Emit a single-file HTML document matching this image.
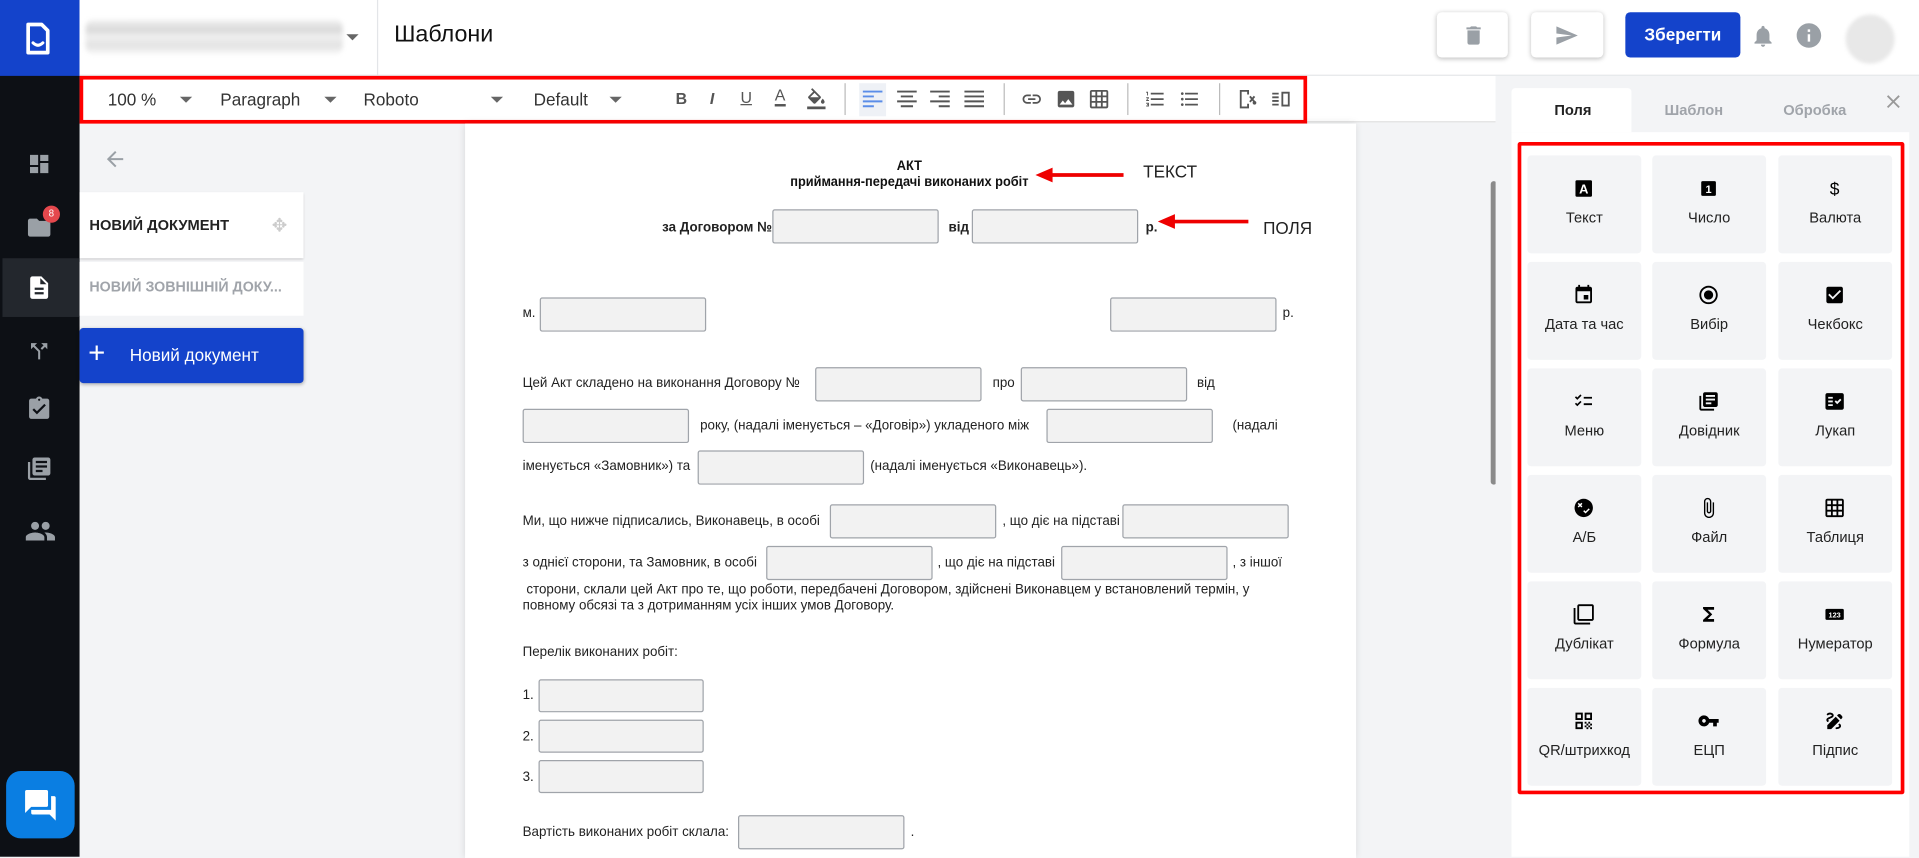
<!DOCTYPE html>
<html><head><meta charset="utf-8">
<style>
*{box-sizing:border-box;margin:0;padding:0}
html,body{width:1919px;height:856px;overflow:hidden;background:#f3f4f6}
#s{position:absolute;left:0;top:0;width:1568px;height:700px;transform:scale(1.2239);transform-origin:0 0;font-family:"Liberation Sans","Noto Sans CJK SC",sans-serif;background:#f3f4f6}
.a{position:absolute}
.f{position:absolute;width:136px;height:28px;background:#f2f2f2;border:1px solid #a0a4aa;border-radius:2px}
.t{position:absolute;font-size:11.5px;line-height:14px;color:#222;white-space:nowrap;transform:scaleX(.95);transform-origin:0 0}
.tc{position:absolute;left:593px;width:300px;text-align:center;font-size:11px;line-height:14px;font-weight:bold;color:#111;transform:scaleX(.95);transform-origin:50% 0}
.b{font-weight:bold}
.ic{position:absolute;fill:#9aa0a6}
.tb{position:absolute;top:72px;width:18px;height:18px;fill:#555}
.tile{position:absolute;width:93px;height:80px;background:#f3f4f6;border-radius:3px;text-align:center;font-size:12px;color:#222}
.tile svg{position:absolute;left:37px;top:18px;width:18px;height:18px}
.tile span{position:absolute;left:0;right:0;top:44px}
.car{position:absolute;top:79px;width:0;height:0;border-left:5px solid transparent;border-right:5px solid transparent;border-top:5px solid #666}
.sep{position:absolute;top:68px;width:1px;height:26px;background:#bbb}
</style></head><body><div id="s">
<!-- sidebar -->
<div class="a" style="left:0;top:0;width:65px;height:700px;background:#0d1015"></div>
<div class="a" style="left:0;top:0;width:65px;height:62px;background:#1443cb"></div>
<svg class="a" style="left:20px;top:18px" width="22" height="28" viewBox="0 0 22 28"><path d="M3 2h11l5 5v18H3z" fill="none" stroke="#fff" stroke-width="3" stroke-linejoin="round"/><path d="M7 17q4 4 8 0" fill="none" stroke="#fff" stroke-width="2.5" stroke-linecap="round"/></svg>
<div class="a" style="left:2px;top:211px;width:63px;height:48px;background:#23272d"></div>
<svg class="ic" style="left:22px;top:124px" width="20" height="20" viewBox="0 0 24 24"><path d="M3 13h8V3H3v10zm0 8h8v-6H3v6zm10 0h8V11h-8v10zm0-18v6h8V3h-8z"/></svg>
<svg class="ic" style="left:21px;top:175px" width="22" height="22" viewBox="0 0 24 24"><path d="M10 4H4c-1.1 0-2 .9-2 2v12c0 1.1.9 2 2 2h16c1.1 0 2-.9 2-2V8c0-1.1-.9-2-2-2h-8l-2-2z"/></svg>
<div class="a" style="left:35px;top:168px;width:14px;height:14px;border-radius:7px;background:#e5484d;color:#fff;font-size:8px;line-height:14px;text-align:center">8</div>
<svg class="a" style="left:21px;top:224px" width="22" height="22" viewBox="0 0 24 24"><path fill="#fff" d="M14 2H6c-1.1 0-2 .9-2 2v16c0 1.1.9 2 2 2h12c1.1 0 2-.9 2-2V8l-6-6zm2 16H8v-2h8v2zm0-4H8v-2h8v2zm-3-5V3.5L18.5 9H13z"/></svg>
<svg class="ic" style="left:22px;top:276px" width="20" height="22" viewBox="0 0 24 24"><path d="M14 4l2.29 2.29-2.88 2.88 1.42 1.42 2.88-2.88L20 10V4zm-4 0H4v6l2.29-2.29 4.71 4.7V20h2v-8.41l-5.29-5.3z"/></svg>
<svg class="ic" style="left:21px;top:323px" width="22" height="22" viewBox="0 0 24 24"><path d="M19 3h-4.18C14.4 1.84 13.3 1 12 1c-1.3 0-2.4.84-2.82 2H5c-1.1 0-2 .9-2 2v14c0 1.1.9 2 2 2h14c1.1 0 2-.9 2-2V5c0-1.1-.9-2-2-2zm-7 0c.55 0 1 .45 1 1s-.45 1-1 1-1-.45-1-1 .45-1 1-1zm-2 14l-4-4 1.41-1.41L10 14.17l6.59-6.59L18 9l-8 8z"/></svg>
<svg class="ic" style="left:21px;top:372px" width="22" height="22" viewBox="0 0 24 24"><path d="M4 6H2v14c0 1.1.9 2 2 2h14v-2H4V6zm16-4H8c-1.1 0-2 .9-2 2v12c0 1.1.9 2 2 2h12c1.1 0 2-.9 2-2V4c0-1.1-.9-2-2-2zm-1 9H9V9h10v2zm-4 4H9v-2h6v2zm4-8H9V5h10v2z"/></svg>
<svg class="ic" style="left:20px;top:421px" width="26" height="26" viewBox="0 0 24 24"><path d="M16 11c1.66 0 2.99-1.34 2.99-3S17.66 5 16 5c-1.66 0-3 1.34-3 3s1.34 3 3 3zm-8 0c1.66 0 2.99-1.34 2.99-3S9.66 5 8 5C6.34 5 5 6.34 5 8s1.34 3 3 3zm0 2c-2.33 0-7 1.17-7 3.5V19h14v-2.5c0-2.33-4.67-3.5-7-3.5zm8 0c-.29 0-.62.02-.97.05 1.16.84 1.97 1.97 1.97 3.45V19h6v-2.5c0-2.33-4.67-3.5-7-3.5z"/></svg>
<div class="a" style="left:5px;top:630px;width:56px;height:55px;border-radius:12px;background:#0a7ee2"></div>
<svg class="a" style="left:18px;top:643px" width="30" height="30" viewBox="0 0 24 24"><path fill="#fff" d="M21 6h-2v9H6v2c0 .55.45 1 1 1h11l4 4V7c0-.55-.45-1-1-1zm-4 6V3c0-.55-.45-1-1-1H3c-.55 0-1 .45-1 1v14l4-4h10c.55 0 1-.45 1-1z"/></svg>
<!-- header -->
<div class="a" style="left:65px;top:0;width:1503px;height:62px;background:#fff;border-bottom:1px solid #e3e5e8"></div>
<div class="a" style="left:70px;top:16px;width:210px;height:28px;background:linear-gradient(180deg,#f3f3f3,#d8d8d8 30%,#f0f0f0 50%,#e2e2e2 75%,#f7f7f7);filter:blur(2px);border-radius:6px"></div>
<div class="a" style="left:283px;top:28px;border-left:5px solid transparent;border-right:5px solid transparent;border-top:5px solid #666"></div>
<div class="a" style="left:308px;top:0;width:1px;height:62px;background:#e3e5e8"></div>
<div class="a" style="left:322px;top:18px;font-size:19px;color:#111">Шаблони</div>
<div class="a" style="left:1174px;top:10px;width:58px;height:37px;background:#fff;border-radius:4px;box-shadow:0 1px 4px rgba(0,0,0,.25)"></div>
<svg class="ic" style="left:1194px;top:18px" width="20" height="22" viewBox="0 0 24 24"><path d="M6 19c0 1.1.9 2 2 2h8c1.1 0 2-.9 2-2V7H6v12zM19 4h-3.5l-1-1h-5l-1 1H5v2h14V4z"/></svg>
<div class="a" style="left:1251px;top:10px;width:59px;height:37px;background:#fff;border-radius:4px;box-shadow:0 1px 4px rgba(0,0,0,.25)"></div>
<svg class="ic" style="left:1270px;top:19px" width="20" height="20" viewBox="0 0 24 24"><path d="M2.01 21L23 12 2.01 3 2 10l15 2-15 2z"/></svg>
<div class="a" style="left:1328px;top:10px;width:94px;height:37px;background:#1443cb;border-radius:4px;color:#fff;font-size:14px;font-weight:bold;text-align:center;line-height:37px">Зберегти</div>
<svg class="ic" style="left:1430px;top:19px" width="21" height="21" viewBox="0 0 24 24"><path d="M12 22c1.1 0 2-.9 2-2h-4c0 1.1.89 2 2 2zm6-6v-5c0-3.07-1.64-5.64-4.5-6.32V4c0-.83-.67-1.5-1.5-1.5s-1.5.67-1.5 1.5v.68C7.63 5.36 6 7.92 6 11v5l-2 2v1h16v-1l-2-2z"/></svg>
<svg class="ic" style="left:1466px;top:17px" width="24" height="24" viewBox="0 0 24 24"><path d="M12 2C6.48 2 2 6.48 2 12s4.48 10 10 10 10-4.48 10-10S17.52 2 12 2zm1 15h-2v-6h2v6zm0-8h-2V7h2v2z"/></svg>
<div class="a" style="left:1508px;top:12px;width:40px;height:40px;border-radius:20px;background:#e8e8e8;filter:blur(1.5px)"></div>
<!-- toolbar -->
<div class="a" style="left:65px;top:62px;width:1157px;height:38px;background:#fff;border-bottom:1px solid #e0e0e0"></div>
<div class="a" style="left:88px;top:73px;font-size:14px;color:#333">100 %</div><div class="car" style="left:147px"></div>
<div class="a" style="left:180px;top:73px;font-size:14px;color:#333">Paragraph</div><div class="car" style="left:265px"></div>
<div class="a" style="left:297px;top:73px;font-size:14px;color:#333">Roboto</div><div class="car" style="left:401px"></div>
<div class="a" style="left:436px;top:73px;font-size:14px;color:#333">Default</div><div class="car" style="left:498px"></div>
<div class="a" style="left:552px;top:73px;font-size:13px;font-weight:bold;color:#555">B</div>
<div class="a" style="left:580px;top:73px;font-size:13px;font-style:italic;font-weight:bold;color:#555">I</div>
<div class="a" style="left:605px;top:72px;font-size:13px;text-decoration:underline;color:#555">U</div>
<div class="a" style="left:633px;top:71px;font-size:13px;color:#555;border-bottom:2px solid #555;line-height:14px">A</div>
<svg class="tb" style="left:658px;fill:#555" viewBox="0 0 24 24"><path d="M16.56 8.94L7.62 0 6.21 1.41l2.38 2.38-5.15 5.15c-.59.59-.59 1.54 0 2.12l5.5 5.5c.29.29.68.44 1.06.44s.77-.15 1.06-.44l5.5-5.5c.59-.58.59-1.53 0-2.12zM5.21 10L10 5.21 14.79 10H5.21zM19 11.5s-2 2.17-2 3.5c0 1.1.9 2 2 2s2-.9 2-2c0-1.33-2-3.5-2-3.5z"/><rect x="2" y="20" width="20" height="3"/></svg>
<div class="sep" style="left:690px"></div>
<div class="a" style="left:702px;top:68px;width:22px;height:27px;background:#eef1f6"></div>
<svg class="tb" style="left:704px;fill:#5b8de8" viewBox="0 0 18 18"><path d="M1 2h16v1.6H1zM1 6h9v1.6H1zM1 10h16v1.6H1zM1 14h9v1.6H1z"/></svg>
<svg class="tb" style="left:732px" viewBox="0 0 18 18"><path d="M1 2h16v1.6H1zM4 6h10v1.6H4zM1 10h16v1.6H1zM4 14h10v1.6H4z"/></svg>
<svg class="tb" style="left:759px" viewBox="0 0 18 18"><path d="M1 2h16v1.6H1zM8 6h9v1.6H8zM1 10h16v1.6H1zM8 14h9v1.6H8z"/></svg>
<svg class="tb" style="left:787px" viewBox="0 0 18 18"><path d="M1 2h16v1.6H1zM1 6h16v1.6H1zM1 10h16v1.6H1zM1 14h16v1.6H1z"/></svg>
<div class="sep" style="left:820px"></div>
<svg class="tb" style="left:834px" viewBox="0 0 24 24"><path d="M3.9 12c0-1.71 1.39-3.1 3.1-3.1h4V7H7c-2.76 0-5 2.24-5 5s2.24 5 5 5h4v-1.9H7c-1.71 0-3.1-1.39-3.1-3.1zM8 13h8v-2H8v2zm9-6h-4v1.9h4c1.71 0 3.1 1.39 3.1 3.1s-1.39 3.1-3.1 3.1h-4V17h4c2.76 0 5-2.24 5-5s-2.24-5-5-5z"/></svg>
<svg class="tb" style="left:862px" viewBox="0 0 24 24"><path d="M21 19V5c0-1.1-.9-2-2-2H5c-1.1 0-2 .9-2 2v14c0 1.1.9 2 2 2h14c1.1 0 2-.9 2-2zM8.5 13.5l2.5 3.01L14.5 12l4.5 6H5l3.5-4.5z"/></svg>
<svg class="tb" style="left:889px" viewBox="0 0 24 24"><path d="M20 2H4c-1.1 0-2 .9-2 2v16c0 1.1.9 2 2 2h16c1.1 0 2-.9 2-2V4c0-1.1-.9-2-2-2zM8 20H4v-4h4v4zm0-6H4v-4h4v4zm0-6H4V4h4v4zm6 12h-4v-4h4v4zm0-6h-4v-4h4v4zm0-6h-4V4h4v4zm6 12h-4v-4h4v4zm0-6h-4v-4h4v4zm0-6h-4V4h4v4z"/></svg>
<div class="sep" style="left:921px"></div>
<svg class="tb" style="left:935px" viewBox="0 0 24 24"><path d="M2 17h2v.5H3v1h1v.5H2v1h3v-4H2v1zm1-9h1V4H2v1h1v3zm-1 3h1.8L2 13.1v.9h3v-1H3.2L5 10.9V10H2v1zm5-6v2h14V5H7zm0 14h14v-2H7v2zm0-6h14v-2H7v2z"/></svg>
<svg class="tb" style="left:963px" viewBox="0 0 24 24"><path d="M4 10.5c-.83 0-1.5.67-1.5 1.5s.67 1.5 1.5 1.5 1.5-.67 1.5-1.5-.67-1.5-1.5-1.5zm0-6c-.83 0-1.5.67-1.5 1.5S3.17 7.5 4 7.5 5.5 6.83 5.5 6 4.83 4.5 4 4.5zm0 12c-.83 0-1.5.68-1.5 1.5s.68 1.5 1.5 1.5 1.5-.68 1.5-1.5-.67-1.5-1.5-1.5zM7 19h14v-2H7v2zm0-6h14v-2H7v2zm0-8v2h14V5H7z"/></svg>
<div class="sep" style="left:996px"></div>
<svg class="tb" style="left:1010px" viewBox="0 0 24 24"><path d="M4 2h10v5h-2V4H6v16h6v-3h2v5H4z"/><path d="M15 9l5 6M20 9l-5 6" stroke="#555" stroke-width="2"/><circle cx="20" cy="16" r="2"/></svg>
<svg class="tb" style="left:1038px" viewBox="0 0 24 24"><path d="M2 5h7v2H2zM2 9h7v2H2zM2 13h7v2H2zM2 17h7v2H2zM12 4h9v16h-9zm2 2v12h5V6z"/></svg>
<div class="a" style="left:65px;top:62px;width:1003px;height:39px;border:3px solid #f00"></div>
<!-- left panel -->
<svg class="ic" style="left:84px;top:120px" width="20" height="20" viewBox="0 0 24 24"><path d="M20 11H7.83l5.59-5.59L12 4l-8 8 8 8 1.41-1.41L7.83 13H20v-2z"/></svg>
<div class="a" style="left:65px;top:157px;width:183px;height:54px;background:#fff;box-shadow:0 1px 2px rgba(0,0,0,.2)"></div>
<div class="a" style="left:73px;top:177px;font-size:12px;font-weight:bold;color:#222">НОВИЙ ДОКУМЕНТ</div>
<div class="a" style="left:222px;top:175px;font-size:15px;color:#ccc">✥</div>
<div class="a" style="left:65px;top:214px;width:183px;height:44px;background:#fff"></div>
<div class="a" style="left:73px;top:227px;font-size:12px;font-weight:bold;color:#a0a4aa;transform:scaleX(.97);transform-origin:0 0">НОВИЙ ЗОВНІШНІЙ ДОКУ...</div>
<div class="a" style="left:65px;top:268px;width:183px;height:45px;background:#1443cb;border-radius:3px;box-shadow:0 1px 3px rgba(0,0,0,.3)"></div>
<div class="a" style="left:72px;top:276px;font-size:24px;color:#fff;line-height:26px">+</div>
<div class="a" style="left:106px;top:282px;font-size:14px;color:#fff">Новий документ</div>
<!-- document -->
<div class="a" style="left:380px;top:101px;width:728px;height:600px;background:#fff;box-shadow:0 0 6px rgba(0,0,0,.12)"></div>
<div class="a" style="left:1218px;top:148px;width:5px;height:248px;background:#8a8a8a;border-radius:3px"></div>
<div class="tc" style="top:129px">АКТ</div>
<div class="tc" style="top:142px">приймання-передачі виконаних робіт</div>
<svg class="a" style="left:846px;top:136px" width="74" height="14"><path d="M12 7H72" stroke="#e00" stroke-width="3"/><path d="M0 7l14-6v12z" fill="#e00"/></svg>
<div class="a" style="left:934px;top:132px;font-size:14px;color:#222">ТЕКСТ</div>
<div class="t b" style="left:541px;top:179px">за Договором №</div>
<div class="f" style="left:631px;top:171px"></div>
<div class="t b" style="left:775px;top:179px">від</div>
<div class="f" style="left:794px;top:171px"></div>
<div class="t b" style="left:936px;top:179px">р.</div>
<svg class="a" style="left:946px;top:174px" width="76" height="14"><path d="M12 7H74" stroke="#e00" stroke-width="3"/><path d="M0 7l14-6v12z" fill="#e00"/></svg>
<div class="a" style="left:1032px;top:178px;font-size:14px;color:#222">ПОЛЯ</div>
<div class="t" style="left:427px;top:249px">м.</div>
<div class="f" style="left:441px;top:243px"></div>
<div class="f" style="left:907px;top:243px"></div>
<div class="t" style="left:1048px;top:249px">р.</div>
<div class="t" style="left:427px;top:306px">Цей Акт складено на виконання Договору №</div>
<div class="f" style="left:666px;top:300px"></div>
<div class="t" style="left:811px;top:306px">про</div>
<div class="f" style="left:834px;top:300px"></div>
<div class="t" style="left:978px;top:306px">від</div>
<div class="f" style="left:427px;top:334px"></div>
<div class="t" style="left:572px;top:341px">року, (надалі іменується – «Договір») укладеного між</div>
<div class="f" style="left:855px;top:334px"></div>
<div class="t" style="left:1007px;top:341px">(надалі</div>
<div class="t" style="left:427px;top:374px">іменується «Замовник») та</div>
<div class="f" style="left:570px;top:368px"></div>
<div class="t" style="left:711px;top:374px">(надалі іменується «Виконавець»).</div>
<div class="t" style="left:427px;top:419px">Ми, що нижче підписались, Виконавець, в особі</div>
<div class="f" style="left:678px;top:412px"></div>
<div class="t" style="left:819px;top:419px">, що діє на підставі</div>
<div class="f" style="left:917px;top:412px"></div>
<div class="t" style="left:427px;top:453px">з однієї сторони, та Замовник, в особі</div>
<div class="f" style="left:626px;top:446px"></div>
<div class="t" style="left:766px;top:453px">, що діє на підставі</div>
<div class="f" style="left:867px;top:446px"></div>
<div class="t" style="left:1007px;top:453px">, з іншої</div>
<div class="t" style="left:427px;top:475px">&nbsp;сторони, склали цей Акт про те, що роботи, передбачені Договором, здійснені Виконавцем у встановлений термін, у</div>
<div class="t" style="left:427px;top:488px">повному обсязі та з дотриманням усіх інших умов Договору.</div>
<div class="t" style="left:427px;top:526px">Перелік виконаних робіт:</div>
<div class="t" style="left:427px;top:561px">1.</div><div class="f" style="left:440px;top:555px;width:135px;height:27px"></div>
<div class="t" style="left:427px;top:595px">2.</div><div class="f" style="left:440px;top:588px;width:135px;height:27px"></div>
<div class="t" style="left:427px;top:628px">3.</div><div class="f" style="left:440px;top:621px;width:135px;height:27px"></div>
<div class="t" style="left:427px;top:673px">Вартість виконаних робіт склала:</div>
<div class="f" style="left:603px;top:666px"></div>
<div class="t" style="left:744px;top:673px">.</div>
<!-- right panel -->
<div class="a" style="left:1222px;top:62px;width:346px;height:638px;background:#f3f4f6"></div>
<div class="a" style="left:1235px;top:72px;width:98px;height:36px;background:#fff;border-radius:3px 3px 0 0"></div>
<div class="a" style="left:1270px;top:83px;font-size:12px;font-weight:bold;color:#222">Поля</div>
<div class="a" style="left:1360px;top:83px;font-size:12px;font-weight:bold;color:#a0a4aa">Шаблон</div>
<div class="a" style="left:1457px;top:83px;font-size:12px;font-weight:bold;color:#a0a4aa">Обробка</div>
<svg class="a" style="left:1538px;top:74px" width="18" height="18" viewBox="0 0 24 24"><path fill="#999" d="M19 6.41L17.59 5 12 10.59 6.41 5 5 6.41 10.59 12 5 17.59 6.41 19 12 13.41 17.59 19 19 17.59 13.41 12z"/></svg>
<div class="a" style="left:1235px;top:108px;width:325px;height:592px;background:#fff"></div>
<div class="a" style="left:1240px;top:116px;width:316px;height:533px;border:3px solid #f00;border-radius:2px"></div>

<div class="tile" style="left:1248px;top:127px"><svg viewBox="0 0 24 24"><rect x="3" y="3" width="18" height="18" rx="1.5"/><text x="12" y="17.5" font-size="14" font-weight="bold" fill="#fff" text-anchor="middle" font-family="Liberation Sans">A</text></svg><span>Текст</span></div>
<div class="tile" style="left:1350px;top:127px"><svg viewBox="0 0 24 24"><rect x="4" y="4" width="16" height="16" rx="1.5"/><text x="12" y="17" font-size="12" font-weight="bold" fill="#fff" text-anchor="middle" font-family="Liberation Sans">1</text></svg><span>Число</span></div>
<div class="tile" style="left:1453px;top:127px"><svg viewBox="0 0 24 24"><text x="12" y="19" font-size="19" text-anchor="middle" font-family="Liberation Sans">$</text></svg><span>Валюта</span></div>

<div class="tile" style="left:1248px;top:214px"><svg viewBox="0 0 24 24"><path d="M17 12h-5v5h5v-5zM16 1v2H8V1H6v2H5c-1.11 0-1.99.9-1.99 2L3 19c0 1.1.89 2 2 2h14c1.1 0 2-.9 2-2V5c0-1.1-.9-2-2-2h-1V1h-2zm3 18H5V8h14v11z"/></svg><span>Дата та час</span></div>
<div class="tile" style="left:1350px;top:214px"><svg viewBox="0 0 24 24"><path d="M12 7c-2.76 0-5 2.24-5 5s2.24 5 5 5 5-2.24 5-5-2.24-5-5-5zm0-5C6.48 2 2 6.48 2 12s4.48 10 10 10 10-4.48 10-10S17.52 2 12 2zm0 18c-4.42 0-8-3.58-8-8s3.58-8 8-8 8 3.58 8 8-3.58 8-8 8z"/></svg><span>Вибір</span></div>
<div class="tile" style="left:1453px;top:214px"><svg viewBox="0 0 24 24"><path d="M19 3H5c-1.11 0-2 .9-2 2v14c0 1.1.89 2 2 2h14c1.11 0 2-.9 2-2V5c0-1.1-.89-2-2-2zm-9 14l-5-5 1.41-1.41L10 14.17l7.59-7.59L19 8l-9 9z"/></svg><span>Чекбокс</span></div>

<div class="tile" style="left:1248px;top:301px"><svg viewBox="0 0 24 24"><path d="M3 7l2 2 4-4M3 14l2 2 4-4" fill="none" stroke="#000" stroke-width="1.8"/><path d="M12 7h9v2h-9zM12 14h9v2h-9z"/></svg><span>Меню</span></div>
<div class="tile" style="left:1350px;top:301px"><svg viewBox="0 0 24 24"><path d="M4 6H2v14c0 1.1.9 2 2 2h14v-2H4V6zm16-4H8c-1.1 0-2 .9-2 2v12c0 1.1.9 2 2 2h12c1.1 0 2-.9 2-2V4c0-1.1-.9-2-2-2zm-1 9H9V9h10v2zm-4 4H9v-2h6v2zm4-8H9V5h10v2z"/></svg><span>Довідник</span></div>
<div class="tile" style="left:1453px;top:301px"><svg viewBox="0 0 24 24"><path d="M20 3H4c-1.1 0-2 .9-2 2v14c0 1.1.9 2 2 2h16c1.1 0 2-.9 2-2V5c0-1.1-.9-2-2-2zM10 17H5v-2h5v2zm0-4H5v-2h5v2zm0-4H5V7h5v2zm4.82 6L12 12.16l1.41-1.41 1.41 1.42L17.99 9l1.42 1.42L14.82 15z"/></svg><span>Лукап</span></div>

<div class="tile" style="left:1248px;top:388px"><svg viewBox="0 0 24 24"><circle cx="12" cy="12" r="10"/><path d="M6 7l4 4M10 7l-4 4" stroke="#fff" stroke-width="1.6"/><path d="M12 15l2 2 4-4" fill="none" stroke="#fff" stroke-width="1.6"/></svg><span>А/Б</span></div>
<div class="tile" style="left:1350px;top:388px"><svg viewBox="0 0 24 24"><path d="M16.5 6v11.5c0 2.21-1.79 4-4 4s-4-1.79-4-4V5c0-1.38 1.12-2.5 2.5-2.5s2.5 1.12 2.5 2.5v10.5c0 .55-.45 1-1 1s-1-.45-1-1V6H10v9.5c0 1.38 1.12 2.5 2.5 2.5s2.5-1.12 2.5-2.5V5c0-2.21-1.79-4-4-4S7 2.79 7 5v12.5c0 3.04 2.46 5.5 5.5 5.5s5.5-2.46 5.5-5.5V6h-1.5z"/></svg><span>Файл</span></div>
<div class="tile" style="left:1453px;top:388px"><svg viewBox="0 0 24 24"><path d="M20 2H4c-1.1 0-2 .9-2 2v16c0 1.1.9 2 2 2h16c1.1 0 2-.9 2-2V4c0-1.1-.9-2-2-2zM8 20H4v-4h4v4zm0-6H4v-4h4v4zm0-6H4V4h4v4zm6 12h-4v-4h4v4zm0-6h-4v-4h4v4zm0-6h-4V4h4v4zm6 12h-4v-4h4v4zm0-6h-4v-4h4v4zm0-6h-4V4h4v4z"/></svg><span>Таблиця</span></div>

<div class="tile" style="left:1248px;top:475px"><svg viewBox="0 0 24 24"><path d="M3 5H1v16c0 1.1.9 2 2 2h16v-2H3V5zm18-4H7c-1.1 0-2 .9-2 2v14c0 1.1.9 2 2 2h14c1.1 0 2-.9 2-2V3c0-1.1-.9-2-2-2zm0 16H7V3h14v14z"/></svg><span>Дублікат</span></div>
<div class="tile" style="left:1350px;top:475px"><svg viewBox="0 0 24 24"><path d="M18 4H6v2l6.5 6L6 18v2h12v-3h-7l5-5-5-5h7z"/></svg><span>Формула</span></div>
<div class="tile" style="left:1453px;top:475px"><svg viewBox="0 0 24 24"><rect x="2" y="6" width="20" height="12" rx="1.5"/><text x="12" y="15.5" font-size="8" font-weight="bold" fill="#fff" text-anchor="middle" font-family="Liberation Sans">123</text></svg><span>Нумератор</span></div>

<div class="tile" style="left:1248px;top:562px"><svg viewBox="0 0 24 24"><path d="M3 3h8v8H3zm2 2v4h4V5zM13 3h8v8h-8zm2 2v4h4V5zM3 13h8v8H3zm2 2v4h4v-4zM13 13h2v2h-2zM17 13h2v2h-2zM15 15h2v2h-2zM13 17h2v2h-2zM17 17h2v2h-2zM15 19h2v2h-2zM19 19h2v2h-2zM19 15h2v2h-2z"/></svg><span>QR/штрихкод</span></div>
<div class="tile" style="left:1350px;top:562px"><svg viewBox="0 0 24 24"><path d="M12.65 10C11.83 7.67 9.61 6 7 6c-3.31 0-6 2.69-6 6s2.69 6 6 6c2.61 0 4.83-1.67 5.65-4H17v4h4v-4h2v-4H12.65zM7 14c-1.1 0-2-.9-2-2s.9-2 2-2 2 .9 2 2-.9 2-2 2z"/></svg><span>ЕЦП</span></div>
<div class="tile" style="left:1453px;top:562px"><svg viewBox="0 0 24 24"><path d="M18.85 10.39l1.06-1.06c.78-.78.78-2.05 0-2.83L18.5 5.09c-.78-.78-2.05-.78-2.83 0l-1.06 1.06 4.24 4.24zm-5.66-2.83L4 16.76V21h4.24l9.19-9.19-4.24-4.25zM19 17.5c0 2.19-2.54 3.5-5 3.5-.55 0-1-.45-1-1s.45-1 1-1c1.54 0 3-.73 3-1.5 0-.47-.48-.87-1.23-1.2l1.48-1.48c1.07.63 1.75 1.47 1.75 2.68zM4.58 13.35C3.61 12.79 3 12.06 3 11c0-1.8 1.89-2.63 3.56-3.36C7.59 7.18 9 6.56 9 6c0-.41-.78-1-2-1-1.26 0-1.8.61-1.83.64-.35.41-.98.46-1.4.12-.41-.34-.49-.95-.15-1.38C3.73 4.24 4.76 3 7 3s4 1.32 4 3c0 1.87-1.93 2.72-3.64 3.47C6.42 9.88 5 10.5 5 11c0 .31.43.6 1.07.86l-1.49 1.49z"/></svg><span>Підпис</span></div>
</div></body></html>
